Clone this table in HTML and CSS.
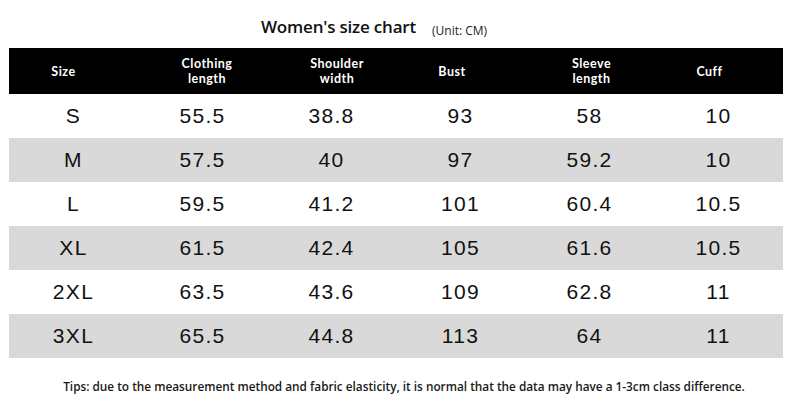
FILE: index.html
```html
<!DOCTYPE html>
<html lang="en">
<head>
<meta charset="utf-8">
<title>Women's size chart</title>
<link rel="stylesheet" href="styles.css">
</head>
<body>
<div class="page">
  <div class="title-row">
    <h1 class="title">Women's size chart</h1>
    <span class="unit">(Unit: CM)</span>
  </div>
  <div class="chart">
    <div class="row head">
      <div class="cell h-size">Size</div>
      <div class="cell h-length">Clothing<br>length</div>
      <div class="cell h-shoulder">Shoulder<br>width</div>
      <div class="cell h-bust">Bust</div>
      <div class="cell h-sleeve">Sleeve<br>length</div>
      <div class="cell h-cuff">Cuff</div>
    </div>
    <div class="row">
      <div class="cell">S</div><div class="cell">55.5</div><div class="cell">38.8</div><div class="cell">93</div><div class="cell">58</div><div class="cell">10</div>
    </div>
    <div class="row alt">
      <div class="cell">M</div><div class="cell">57.5</div><div class="cell">40</div><div class="cell">97</div><div class="cell">59.2</div><div class="cell">10</div>
    </div>
    <div class="row">
      <div class="cell">L</div><div class="cell">59.5</div><div class="cell">41.2</div><div class="cell">101</div><div class="cell">60.4</div><div class="cell">10.5</div>
    </div>
    <div class="row alt">
      <div class="cell">XL</div><div class="cell">61.5</div><div class="cell">42.4</div><div class="cell">105</div><div class="cell">61.6</div><div class="cell">10.5</div>
    </div>
    <div class="row">
      <div class="cell">2XL</div><div class="cell">63.5</div><div class="cell">43.6</div><div class="cell">109</div><div class="cell">62.8</div><div class="cell">11</div>
    </div>
    <div class="row alt">
      <div class="cell">3XL</div><div class="cell">65.5</div><div class="cell">44.8</div><div class="cell">113</div><div class="cell">64</div><div class="cell">11</div>
    </div>
  </div>
  <p class="tips">Tips: due to the measurement method and fabric elasticity, it is normal that the data may have a 1-3cm class difference.</p>
</div>
</body>
</html>
```

FILE: styles.css
```css
* { box-sizing: border-box; }

html, body {
  margin: 0;
  padding: 0;
  background: #ffffff;
}

.page {
  width: 790px;
  padding: 0 7px 0 9px;
  font-family: "Open Sans", "Liberation Sans", sans-serif;
  color: #111;
}

.title-row {
  height: 48px;
  display: flex;
  align-items: flex-end;
  padding: 0 0 10px 252px;
  gap: 16px;
}

.title {
  margin: 0;
  font-size: 17px;
  line-height: 22px;
  font-weight: 600;
  color: #111;
  letter-spacing: -0.2px;
}

.unit {
  font-size: 12px;
  line-height: 13px;
  font-weight: 500;
  color: #222;
  padding-bottom: 1px;
}

.chart {
  width: 774px;
}

.row {
  display: grid;
  grid-template-columns: repeat(6, 1fr);
  height: 44px;
  align-items: center;
}

.row.alt {
  background: #d9d9d9;
}

.cell {
  text-align: center;
  font-family: "Liberation Sans", Arial, sans-serif;
  font-size: 21px;
  letter-spacing: 1.3px;
  color: #111;
  line-height: 24px;
}

.row.head {
  height: 46px;
  background: #000;
}

.row.head .cell {
  font-family: "Lato", "Open Sans", sans-serif;
  font-weight: 700;
  font-size: 12.5px;
  line-height: 15px;
  letter-spacing: 0.5px;
  color: #fff;
}

.h-size { padding-right: 20px; }
.h-length { padding-left: 9px; }
.h-shoulder { padding-left: 11px; }
.h-bust { padding-right: 17px; }
.h-sleeve { padding-left: 4px; }
.h-cuff { padding-right: 18px; }

.tips {
  margin: 20px 0 0;
  padding-left: 16px;
  text-align: center;
  font-size: 11.8px;
  line-height: 16px;
  font-weight: 600;
  color: #1a1a1a;
}
```
